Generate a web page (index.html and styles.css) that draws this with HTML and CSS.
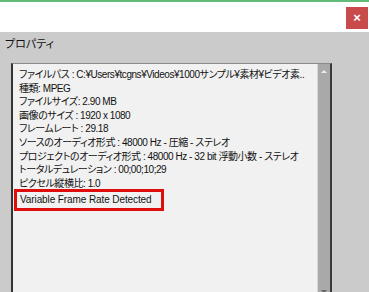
FILE: index.html
```html
<!DOCTYPE html>
<html lang="ja">
<head>
    <meta charset="UTF-8">
    <title>プロパティ</title>
    <link rel="stylesheet" href="styles.css">
</head>
<body>
    <div class="titlebar">
        <button class="close">×</button>
    </div>
    <div class="panel">
        <div class="caption">プロパティ</div>
        <div class="box">
            <div class="list">
                <div class="line">ファイルパス : C:¥Users¥tcgns¥Videos¥1000サンプル¥素材¥ビデオ素..</div>
                <div class="line">種類: MPEG</div>
                <div class="line">ファイルサイズ: 2.90 MB</div>
                <div class="line">画像のサイズ : 1920 x 1080</div>
                <div class="line">フレームレート : 29.18</div>
                <div class="line">ソースのオーディオ形式 : 48000 Hz - 圧縮 - ステレオ</div>
                <div class="line">プロジェクトのオーディオ形式 : 48000 Hz - 32 bit 浮動小数 - ステレオ</div>
                <div class="line">トータルデュレーション : 00;00;10;29</div>
                <div class="line">ピクセル縦横比: 1.0</div>
                <div class="line"><span class="mark">Variable Frame Rate Detected</span></div>
            </div>
            <div class="scrollbar"><span class="arrow up"></span><span class="arrow down"></span></div>
        </div>
    </div>
</body>
</html>
```

FILE: styles.css
```css
html, body { margin: 0; padding: 0; height: 100%; overflow: hidden; }
body { background: #cbcbcb; font-family: "Liberation Sans", "Noto Sans CJK JP", sans-serif; font-size: 10px; color: #111; font-feature-settings: "palt"; }
.titlebar { background: #fff; border-top: 2px solid #62bb7a; height: 30px; display: flex; justify-content: flex-end; align-items: flex-start; padding-right: 1px; }
.close { margin-top: 5px; width: 22px; height: 22px; border: none; background: #c94a4b; color: #fff; font-size: 13px; font-weight: bold; line-height: 20px; padding: 0; font-family: "Liberation Sans", sans-serif; }
.panel { padding: 7px 37px 0 11px; }
.caption { font-size: 11px; height: 24px; line-height: 11px; margin-left: -6px; }
.box { display: flex; height: 240px; background: #f1f1f1; border-top: 1px solid #8a8a8a; border-left: 2px solid #333; border-right: 2px solid #3a3a3a; }
.list { flex: 1; padding: 4px 0 0 6px; white-space: nowrap; overflow: hidden; letter-spacing: -0.45px; }
.line { height: 13.6px; line-height: 13.6px; }
.mark { display: inline-block; margin: -1px 0 0 -5px; padding: 1px 9px 2px 3px; border: 3px solid #e00d0d; line-height: 13px; letter-spacing: -0.1px; }
.scrollbar { width: 12px; background: #a9a9a9; border-left: 1px solid #d6d6d6; position: relative; }
.arrow { position: absolute; left: 3px; width: 0; height: 0; border-left: 3px solid transparent; border-right: 3px solid transparent; }
.up { top: 6px; border-bottom: 3px solid #eee; }
.down { top: 226px; border-top: 3px solid #666; }
```
